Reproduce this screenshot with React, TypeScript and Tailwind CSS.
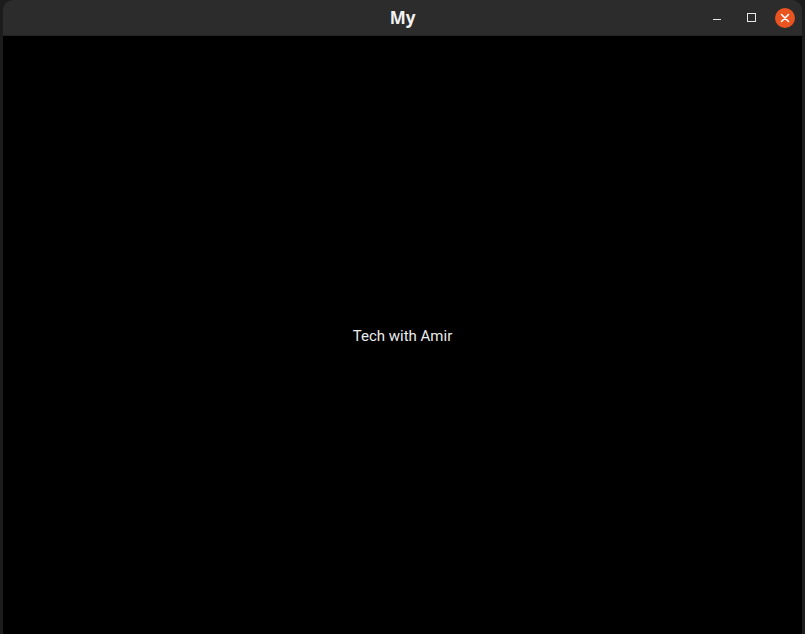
function TitleBar() {
    return (
        <div className="relative flex items-center justify-center h-[36px] bg-[#2c2c2c] rounded-t-[10px] border-b border-[#232323]">
            <p className="text-[17px] font-bold text-[#f2f2f2] font-['Noto_Sans',sans-serif]">My</p>
            <div className="absolute right-[7px] top-0 h-[35px] flex items-center gap-[14px]">
                <div className="w-[20px] h-[20px] flex items-center justify-center">
                    <div className="w-[8px] h-[1px] mt-[4px] bg-[#e6e6e6]"></div>
                </div>
                <div className="w-[20px] h-[20px] flex items-center justify-center">
                    <div className="w-[9px] h-[9px] border border-[#e6e6e6]"></div>
                </div>
                <div className="w-[20px] h-[20px] rounded-full bg-[#e95420] flex items-center justify-center">
                    <svg width="10" height="10" viewBox="0 0 10 10">
                        <path d="M1.5 1.5 L8.5 8.5 M8.5 1.5 L1.5 8.5" stroke="#ffffff" strokeWidth="1.6" strokeLinecap="round" />
                    </svg>
                </div>
            </div>
        </div>
    );
}

export default function App() {
    return (
        <div className="w-[805px] h-[634px] bg-[#1c1c1c] flex pl-[3px] pr-[3px] overflow-hidden">
            <div className="flex flex-col w-[799px] h-[634px]">
                <TitleBar />
                <div className="flex-1 bg-black flex items-center justify-center">
                    <p className="text-[15px] text-[#ececec] font-['Roboto',sans-serif] mb-[-3px]">Tech with Amir</p>
                </div>
            </div>
        </div>
    );
}
